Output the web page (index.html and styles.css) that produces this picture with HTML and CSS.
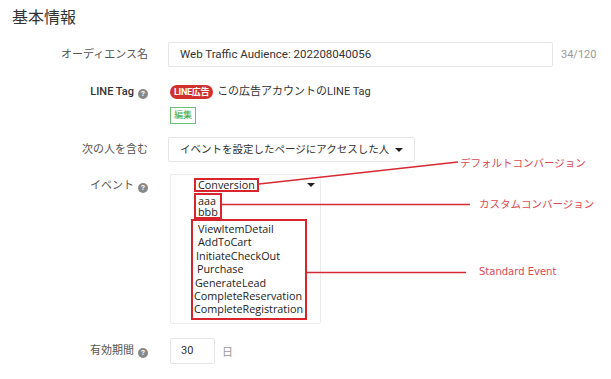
FILE: index.html
```html
<!DOCTYPE html>
<html lang="ja">
<head>
  <meta charset="UTF-8">
  <title>基本情報</title>
  <link rel="stylesheet" href="styles.css">
</head>
<body>
  <div class="page">
    <h2 class="title">基本情報</h2>

    <div class="row r-name">
      <div class="label">オーディエンス名</div>
      <div class="field">
        <div class="input wide">Web Traffic Audience: 202208040056</div>
        <span class="count">34/120</span>
      </div>
    </div>

    <div class="row r-tag">
      <div class="label strong">LINE Tag<span class="help">?</span></div>
      <div class="field stack">
        <div class="tagline"><span class="badge">LINE広告</span>この広告アカウントのLINE Tag</div>
        <span class="edit">編集</span>
      </div>
    </div>

    <div class="row r-who">
      <div class="label">次の人を含む</div>
      <div class="field">
        <div class="input select">イベントを設定したページにアクセスした人<span class="caret"></span></div>
      </div>
    </div>

    <div class="row r-event">
      <div class="label">イベント<span class="help">?</span></div>
      <div class="field">
        <div class="events">
          <div class="ev-head">
            <span class="mark conv">Conversion</span>
            <span class="caret"></span>
          </div>
          <div class="mark custom">
            <div>aaa</div>
            <div>bbb</div>
          </div>
          <div class="mark standard">
            <div class="in4">ViewItemDetail</div>
            <div class="in4">AddToCart</div>
            <div class="in2">InitiateCheckOut</div>
            <div class="in3">Purchase</div>
            <div class="in1">GenerateLead</div>
            <div>CompleteReservation</div>
            <div>CompleteRegistration</div>
          </div>
        </div>
      </div>
    </div>

    <div class="row r-days">
      <div class="label">有効期間<span class="help">?</span></div>
      <div class="field">
        <div class="input days">30</div>
        <span class="unit">日</span>
      </div>
    </div>

    <!-- annotations drawn over the screenshot -->
    <svg class="notes" width="611" height="379" viewBox="0 0 611 379">
      <line x1="259" y1="184" x2="458" y2="162" />
      <line x1="220" y1="204.5" x2="470" y2="204.5" />
      <line x1="306" y1="272.5" x2="466" y2="272.5" />
    </svg>
    <span class="note n-default">デフォルトコンバージョン</span>
    <span class="note n-custom">カスタムコンバージョン</span>
    <span class="note n-std">Standard Event</span>
  </div>
</body>
</html>
```

FILE: styles.css
```css
body {
  margin: 0;
  background: #fff;
  font-family: Roboto, "Noto Sans CJK JP", sans-serif;
  font-size: 11px;
  color: #333;
}
.page {
  position: relative;
  width: 611px;
  height: 379px;
  overflow: hidden;
}
.title {
  margin: 0;
  padding: 7px 0 0 12px;
  font-size: 16px;
  font-weight: 400;
  line-height: 22px;
  color: #333;
}
.row {
  display: flex;
  align-items: flex-start;
}
.label {
  width: 148px;
  flex: none;
  text-align: right;
  color: #555;
  font-size: 11px;
}
.label.strong {
  color: #333;
  font-weight: 500;
}
.help {
  display: inline-block;
  width: 10px;
  height: 10px;
  margin-left: 4px;
  border-radius: 50%;
  background: #888;
  color: #fff;
  font-size: 8px;
  font-weight: 700;
  line-height: 10px;
  text-align: center;
  vertical-align: -1px;
}
.field {
  margin-left: 20px;
  display: flex;
  align-items: center;
}
.stack {
  flex-direction: column;
  align-items: flex-start;
  margin-left: 22px;
}
.input {
  box-sizing: border-box;
  height: 25px;
  border: 1px solid #e6e6e6;
  border-radius: 2px;
  padding: 0 11px;
  line-height: 23px;
  color: #333;
  background: #fff;
  white-space: nowrap;
}

/* オーディエンス名 */
.r-name {
  margin-top: 13px;
}
.r-name .label {
  line-height: 25px;
}
.wide {
  width: 385px;
  font-size: 11.5px;
}
.count {
  margin-left: 8px;
  color: #999;
}

/* LINE Tag */
.r-tag {
  margin-top: 18px;
}
.r-tag .label {
  line-height: 14px;
}
.tagline {
  display: flex;
  align-items: center;
  line-height: 14px;
  color: #333;
}
.badge {
  display: inline-block;
  height: 14px;
  padding: 0 4px;
  margin-right: 4px;
  border-radius: 7px;
  background: #d1302e;
  color: #fff;
  font-size: 9px;
  font-weight: 700;
  line-height: 14px;
  letter-spacing: -0.3px;
}
.edit {
  margin-top: 8px;
  box-sizing: border-box;
  height: 17px;
  padding: 0 3px;
  border: 1px solid #6cc36f;
  color: #3aa645;
  font-size: 9px;
  line-height: 15px;
}

/* 次の人を含む */
.r-who {
  margin-top: 13px;
}
.r-who .label {
  line-height: 25px;
}
.select {
  width: 247px;
  font-size: 10.5px;
}
.caret {
  display: inline-block;
  width: 0;
  height: 0;
  border-left: 4px solid transparent;
  border-right: 4px solid transparent;
  border-top: 4px solid #222;
}
.select .caret {
  margin-left: 6px;
  vertical-align: 1px;
}

/* イベント */
.r-event {
  margin-top: 12px;
}
.r-event .label {
  padding-top: 5px;
  line-height: 14px;
}
.events {
  box-sizing: border-box;
  width: 151px;
  height: 150px;
  margin-left: 2px;
  padding: 3px 0 0 23px;
  border: 1px solid #ececec;
  border-radius: 2px;
  font-family: "Open Sans", "Noto Sans", sans-serif;
  font-size: 10.8px;
  color: #222;
}
.ev-head {
  display: flex;
  align-items: center;
  justify-content: space-between;
  padding-right: 5px;
}
.mark {
  border: 2px solid #d7242d;
}
.conv {
  padding: 0 2px;
  line-height: 10px;
}
.custom {
  display: inline-block;
  margin-top: 1px;
  padding: 0 2px;
  line-height: 11px;
}
.standard {
  width: 116px;
  box-sizing: border-box;
  margin: 0 0 0 -3px;
  padding: 1px 0 2px 1px;
  line-height: 13.4px;
}
.in1 { padding-left: 1px; }
.in2 { padding-left: 2px; }
.in3 { padding-left: 3px; }
.in4 { padding-left: 4px; }

/* 有効期間 */
.r-days {
  margin-top: 14px;
}
.r-days .label {
  line-height: 26px;
}
.days {
  width: 45px;
  height: 26px;
  margin-left: 2px;
  padding: 0 10px;
  line-height: 24px;
}
.unit {
  margin-left: 7px;
  color: #999;
}

/* 注釈 */
.notes {
  position: absolute;
  left: 0;
  top: 0;
  pointer-events: none;
}
.notes line {
  stroke: #d42a33;
  stroke-width: 1.6;
}
.note {
  position: absolute;
  color: #dc4a54;
  font-family: "Noto Sans CJK JP", sans-serif;
  font-size: 10.5px;
  line-height: 14px;
}
.n-default {
  left: 460px;
  top: 156px;
}
.n-custom {
  left: 479px;
  top: 197px;
}
.n-std {
  left: 479px;
  top: 265px;
  font-family: "DejaVu Sans", sans-serif;
  font-size: 10px;
}
```
